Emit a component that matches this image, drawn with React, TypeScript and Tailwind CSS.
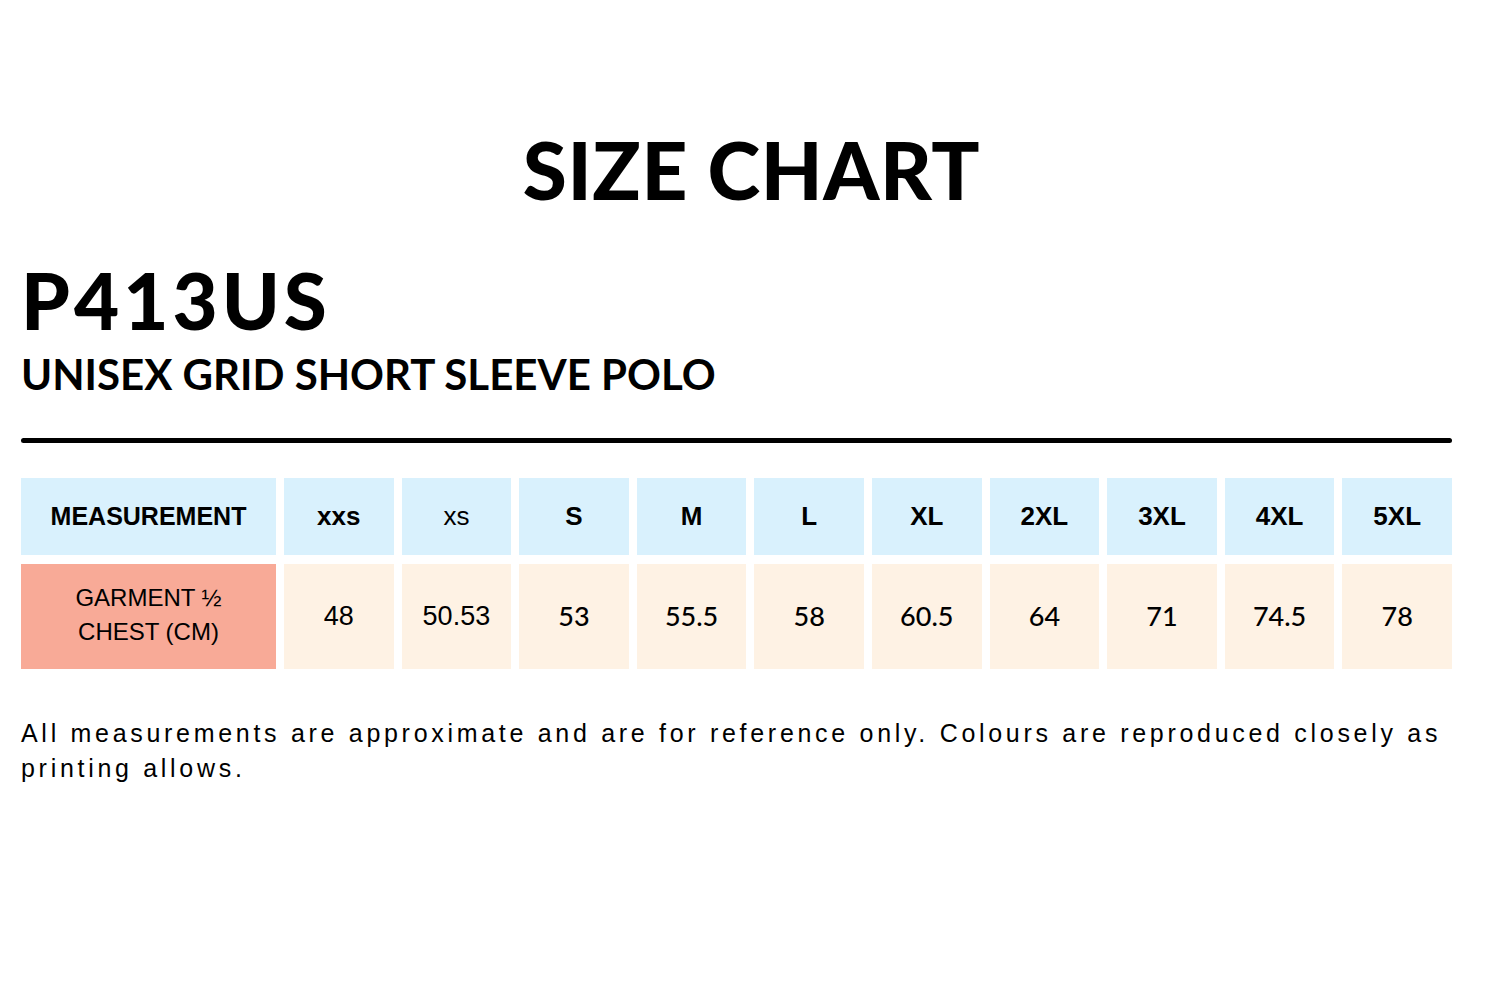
const SIZES = ['xxs', 'xs', 'S', 'M', 'L', 'XL', '2XL', '3XL', '4XL', '5XL'];
const VALUES = ['48', '50.53', '53', '55.5', '58', '60.5', '64', '71', '74.5', '78'];

const arial = "font-['Liberation_Sans',Arial,sans-serif]";
const lato = "font-['Lato',sans-serif]";

function HeaderCell({ label }: { label: string }) {
  const weight = label === 'xs' ? 'font-normal' : 'font-bold';
  return (
    <div
      className={`flex items-center justify-center bg-[#d9f1fd] text-[26px] text-black ${arial} ${weight}`}
    >
      {label}
    </div>
  );
}

function ValueCell({ value, index }: { value: string; index: number }) {
  // the first two values are set in a different face in the source
  const face = index < 2 ? `${arial} text-[27px]` : `${lato} text-[27px] font-medium`;
  return (
    <div className={`flex items-center justify-center bg-[#fef2e4] text-black ${face}`}>
      {value}
    </div>
  );
}

export default function App() {
  return (
    <div className="min-h-[1000px] w-[1500px] bg-white text-black">
      <div className="pl-[21px] pr-[48px]">
        <h1
          className={`pt-[129px] pl-[30px] text-center text-[80px] font-black leading-none tracking-[0.6px] ${lato}`}
        >
          SIZE CHART
        </h1>

        <div className={`mt-[52px] text-[78px] font-black leading-none tracking-[4px] ${lato}`}>
          P413US
        </div>
        <div className={`mt-[14px] text-[42px] font-bold leading-none ${lato}`}>
          UNISEX GRID SHORT SLEEVE POLO
        </div>

        <div className="mt-[43px] h-[5px] rounded-full bg-black" />

        <div className="mt-[35px] grid grid-cols-[255px_repeat(10,1fr)] grid-rows-[77px_105px] gap-x-[8px] gap-y-[9px]">
          <div
            className={`flex items-center justify-center bg-[#d9f1fd] text-[25px] font-bold ${arial}`}
          >
            MEASUREMENT
          </div>
          {SIZES.map((s) => (
            <HeaderCell key={s} label={s} />
          ))}

          <div
            className={`flex items-center justify-center bg-[#f8aa97] pb-[4px] text-center text-[24px] leading-[34px] ${arial}`}
          >
            GARMENT ½
            <br />
            CHEST (CM)
          </div>
          {VALUES.map((v, i) => (
            <ValueCell key={v} value={v} index={i} />
          ))}
        </div>

        <p className={`mt-[47px] text-[25px] leading-[35px] tracking-[3.7px] ${arial}`}>
          All measurements are approximate and are for reference only. Colours are reproduced
          closely as printing allows.
        </p>
      </div>
    </div>
  );
}
